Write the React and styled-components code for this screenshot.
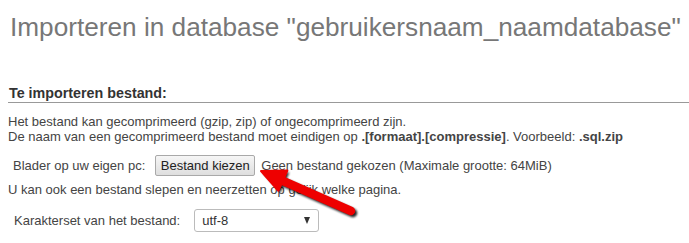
import React from "react";
import styled, { createGlobalStyle } from "styled-components";

const GlobalStyle = createGlobalStyle`
  html, body { margin: 0; padding: 0; background: #fff; }
  body {
    font-family: "Liberation Sans", Arial, sans-serif;
    font-size: 13px;
    color: #444;
  }
`;

const Page = styled.div`
  position: relative;
  padding: 12px 0 0 8px;
  width: 681px;
  height: 231px;
  overflow: hidden;
`;

const Title = styled.h2`
  margin: 0;
  padding-left: 2px;
  font-size: 26.2px;
  line-height: 30px;
  font-weight: normal;
  color: #777;
  white-space: nowrap;
`;

const Section = styled.section`
  margin-top: 44px;
`;

const Legend = styled.div`
  font-size: 14.3px;
  font-weight: bold;
  color: #333;
  line-height: 15px;
  padding: 0 0 1px 1px;
  border-bottom: 1px solid #999;
`;

const Info = styled.p`
  margin: 11px 0 0;
  line-height: 15px;
`;

const Row = styled.div`
  display: flex;
  align-items: center;
  margin-top: ${(p) => p.$mt}px;
  padding-left: ${(p) => p.$indent}px;
`;

const Label = styled.label`
  white-space: nowrap;
  margin-right: ${(p) => p.$gap}px;
`;

const FileButton = styled.button`
  font-family: inherit;
  font-size: 13px;
  color: #222;
  height: 21px;
  width: 100px;
  padding: 0;
  margin-right: 6px;
  border: 1px solid #a9a9a9;
  border-radius: 2px;
  background: linear-gradient(#f6f6f6, #dedede);
  cursor: pointer;
`;

const NoFile = styled.span`
  white-space: nowrap;
`;

const Plain = styled.div`
  margin-top: ${(p) => p.$mt}px;
  white-space: nowrap;
`;

const SelectWrap = styled.div`
  position: relative;
  width: 125px;
  height: 23px;
`;

const Select = styled.select`
  appearance: none;
  width: 100%;
  height: 100%;
  box-sizing: border-box;
  border: 1px solid #bbb;
  border-radius: 3px;
  background: #fff;
  font-family: inherit;
  font-size: 13px;
  color: #333;
  padding: 0 0 0 7px;
  outline: none;
`;

const Caret = styled.span`
  position: absolute;
  right: 9px;
  top: 8px;
  width: 0;
  height: 0;
  border-left: 3.5px solid transparent;
  border-right: 3.5px solid transparent;
  border-top: 7px solid #333;
  pointer-events: none;
`;

const ArrowSvg = styled.svg`
  position: absolute;
  left: 251px;
  top: 157px;
  overflow: visible;
  pointer-events: none;
`;

function RedArrow() {
  return (
    <ArrowSvg width="112" height="66" viewBox="0 0 112 66">
      <defs>
        <filter id="sh" x="-20%" y="-20%" width="150%" height="150%">
          <feGaussianBlur stdDeviation="1.2" />
        </filter>
      </defs>
      <g transform="translate(2 2)" filter="url(#sh)" opacity="0.85">
        <polygon points="10,14 36.4,13.6 27.4,33.8" fill="#000" />
        <line x1="31" y1="23.5" x2="100" y2="54" stroke="#000" strokeWidth="8.5" strokeLinecap="round" />
      </g>
      <polygon points="10,14 36.4,13.6 27.4,33.8" fill="#ee0000" strokeLinejoin="round" stroke="#ee0000" strokeWidth="2" />
      <line x1="31" y1="23.5" x2="100" y2="54" stroke="#ee0000" strokeWidth="8.5" strokeLinecap="round" />
    </ArrowSvg>
  );
}

export default function App() {
  return (
    <>
      <GlobalStyle />
      <Page>
        <Title>Importeren in database "gebruikersnaam_naamdatabase"</Title>
        <Section>
          <Legend>Te importeren bestand:</Legend>
          <Info>
            Het bestand kan gecomprimeerd (gzip, zip) of ongecomprimeerd zijn.
            <br />
            De naam van een gecomprimeerd bestand moet eindigen op <b>.[formaat].[compressie]</b>. Voorbeeld: <b>.sql.zip</b>
          </Info>
          <Row $mt={11} $indent={5}>
            <Label $gap={10}>Blader op uw eigen pc:</Label>
            <FileButton type="button">Bestand kiezen</FileButton>
            <NoFile>Geen bestand gekozen (Maximale grootte: 64MiB)</NoFile>
          </Row>
          <Plain $mt={6}>U kan ook een bestand slepen en neerzetten op gelijk welke pagina.</Plain>
          <Row $mt={12} $indent={6}>
            <Label $gap={14}>Karakterset van het bestand:</Label>
            <SelectWrap>
              <Select defaultValue="utf-8">
                <option value="utf-8">utf-8</option>
              </Select>
              <Caret />
            </SelectWrap>
          </Row>
        </Section>
        <RedArrow />
      </Page>
    </>
  );
}
